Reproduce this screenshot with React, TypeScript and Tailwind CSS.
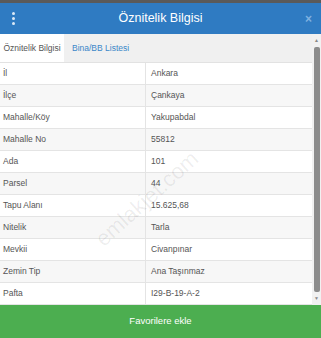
const rows: [string, string][] = [
  ['İl', 'Ankara'],
  ['İlçe', 'Çankaya'],
  ['Mahalle/Köy', 'Yakupabdal'],
  ['Mahalle No', '55812'],
  ['Ada', '101'],
  ['Parsel', '44'],
  ['Tapu Alanı', '15.625,68'],
  ['Nitelik', 'Tarla'],
  ['Mevkii', 'Civanpınar'],
  ['Zemin Tip', 'Ana Taşınmaz'],
  ['Pafta', 'I29-B-19-A-2'],
];

export default function App() {
  return (
    <div className="w-[321px] h-[338px] flex flex-col overflow-hidden bg-white font-['Liberation_Sans',Arial,sans-serif]">
      <div className="h-[3px] bg-[#5a5a5a]" />

      {/* header */}
      <div className="h-[31px] bg-[#2f7bc2] flex items-center pl-[10px] pr-[9px] shrink-0">
        <div className="flex flex-col gap-[2px] w-[6px] items-center">
          <span className="w-[3px] h-[3px] rounded-full bg-[#dce9f6]" />
          <span className="w-[3px] h-[3px] rounded-full bg-[#dce9f6]" />
          <span className="w-[3px] h-[3px] rounded-full bg-[#dce9f6]" />
        </div>
        <div className="flex-1 text-center text-white text-[12.5px] leading-none">Öznitelik Bilgisi</div>
        <div className="text-[#7fb1e0] text-[12px] leading-none font-bold">×</div>
      </div>

      {/* body */}
      <div className="flex-1 flex relative">
        <div className="flex-1 flex flex-col">
          <div className="h-[29px] bg-[#f0f0f0] border-b border-[#e2e2e2] flex items-stretch text-[8.5px]">
            <div className="w-[64px] bg-white flex items-center justify-center text-[#555]">Öznitelik Bilgisi</div>
            <div className="px-[8px] flex items-center text-[#3a87c8]">Bina/BB Listesi</div>
          </div>
          {rows.map(([k, v], i) => (
            <div
              key={k}
              className={`h-[22px] flex text-[8.5px] text-[#555] border-b border-[#e4e4e4] ${i % 2 === 1 ? 'bg-[#f7f7f7]' : 'bg-white'}`}
            >
              <div className="w-[146px] pl-[3px] flex items-center border-r border-[#e4e4e4]">{k}</div>
              <div className="flex-1 pl-[5px] flex items-center">{v}</div>
            </div>
          ))}
        </div>

        {/* scrollbar */}
        <div className="w-[9px] bg-[#f1f1f1] flex flex-col items-center">
          <div className="h-[13px] flex items-center justify-center text-[#888] text-[5px]">▲</div>
          <div className="w-[6px] flex-1 bg-[#8c8c8c] rounded-[2px]" />
          <div className="h-[13px] flex items-center justify-center text-[#888] text-[5px]">▼</div>
        </div>

        {/* watermark */}
        <div className="absolute left-[82px] top-[148px] -rotate-[42deg] text-[22px] text-[#000]/[0.07] pointer-events-none">
          emlakjet.com
        </div>
      </div>

      {/* button */}
      <div className="h-[33px] bg-[#4cae50] flex items-center justify-center text-white text-[9.5px] shrink-0">
        Favorilere ekle
      </div>
    </div>
  );
}
